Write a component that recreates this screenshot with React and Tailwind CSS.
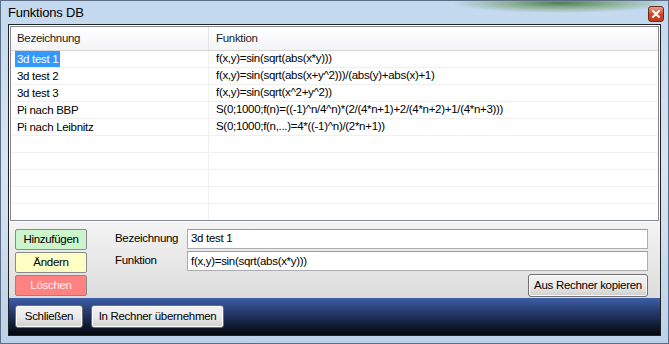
import { useState } from 'react';

const rows = [
  { name: '3d test 1', fn: 'f(x,y)=sin(sqrt(abs(x*y)))' },
  { name: '3d test 2', fn: 'f(x,y)=sin(sqrt(abs(x+y^2)))/(abs(y)+abs(x)+1)' },
  { name: '3d test 3', fn: 'f(x,y)=sin(sqrt(x^2+y^2))' },
  { name: 'Pi nach BBP', fn: 'S(0;1000;f(n)=((-1)^n/4^n)*(2/(4*n+1)+2/(4*n+2)+1/(4*n+3)))' },
  { name: 'Pi nach Leibnitz', fn: 'S(0;1000;f(n,...)=4*((-1)^n)/(2*n+1))' },
  { name: '', fn: '' },
  { name: '', fn: '' },
  { name: '', fn: '' },
  { name: '', fn: '' },
  { name: '', fn: '' },
];

function WinButton({ children, className = '' }) {
  return (
    <button
      className={`whitespace-nowrap rounded-[3px] border border-[#707070] bg-gradient-to-b from-[#f2f2f2] via-[#ebebeb] to-[#cfcfcf] text-[11.5px] tracking-[-0.3px] text-black leading-none shadow-[inset_0_0_0_1px_#fcfcfc] ${className}`}
    >
      {children}
    </button>
  );
}

export default function App() {
  const [selected] = useState(0);

  return (
    <div
      className="w-[669px] h-[344px] flex flex-col overflow-hidden bg-gradient-to-b from-[#c3d9ef] via-[#d6e5f3] to-[#bcd2e8] border border-[#5c6f86] text-[11.5px] tracking-[-0.3px]"
      style={{ fontFamily: '"Liberation Sans", Arial, sans-serif' }}
    >
      {/* Titelleiste */}
      <div className="h-[23px] shrink-0 flex items-center justify-between pl-[7px] pr-[4px] bg-[radial-gradient(ellipse_110px_10px_at_560px_2px,#4f7f55_0%,#8fb39a_50%,transparent_100%)]">
        <span className="text-[13px] tracking-[-0.2px] text-black">Funktions DB</span>
        <div className="w-[16px] h-[16px] mt-[2px] rounded-[3px] border border-[#6b2a1c] bg-gradient-to-b from-[#e8a08a] via-[#d2472a] to-[#c23a1c] flex items-center justify-center">
          <svg width="8" height="8" viewBox="0 0 8 8">
            <path d="M1 1 L7 7 M7 1 L1 7" stroke="#fff" strokeWidth="2" strokeLinecap="square" />
          </svg>
        </div>
      </div>

      {/* Client */}
      <div className="flex-1 flex flex-col mx-[7px] mb-[7px] border border-[#222] bg-white min-h-0">
        {/* ListView */}
        <div className="h-[195px] shrink-0 m-[1px] border border-[#828790] bg-white flex flex-col overflow-hidden">
          <div className="h-[24px] shrink-0 flex bg-gradient-to-b from-white to-[#f3f4f6] border-b border-[#d5d5d5] text-[#1e1e1e]">
            <div className="w-[198px] pl-[6px] flex items-center border-r border-[#e3e4e5]">Bezeichnung</div>
            <div className="flex-1 pl-[7px] flex items-center">Funktion</div>
          </div>
          {rows.map((r, i) => (
            <div key={i} className="h-[17px] shrink-0 flex border-b border-[#f0f0f0] text-black">
              <div className="w-[198px] pl-[4px] flex items-center border-r border-[#f0f0f0]">
                {r.name && (
                  <span className={`px-[2px] leading-[16px] ${i === selected ? 'bg-[#3399ff] text-white' : ''}`}>
                    {r.name}
                  </span>
                )}
              </div>
              <div className="flex-1 pl-[7px] flex items-center whitespace-nowrap">{r.fn}</div>
            </div>
          ))}
        </div>

        {/* Bearbeitungsbereich */}
        <div className="flex-1 flex bg-gradient-to-b from-[#f4f4f4] to-[#dcdcdc] pl-[6px] pr-[12px] pt-[7px]">
          <div className="flex flex-col gap-[2px] w-[72px]">
            <button className="h-[21px] rounded-[2px] border border-[#8a8a8a] bg-[#ccf5cc] text-black">Hinzufügen</button>
            <button className="h-[21px] rounded-[2px] border border-[#8a8a8a] bg-[#ffffc4] text-black">Ändern</button>
            <button className="h-[21px] rounded-[2px] border border-[#8a8a8a] bg-[#ff8282] text-[#fff0f0]">Löschen</button>
          </div>
          <div className="flex-1 flex flex-col ml-[28px]">
            <div className="flex items-center h-[20px]">
              <span className="w-[72px] text-black">Bezeichnung</span>
              <div className="flex-1 h-[20px] border border-[#abadb3] border-t-[#9a9a9a] bg-white text-black pl-[3px] flex items-center">3d test 1</div>
            </div>
            <div className="flex items-center h-[20px] mt-[2px]">
              <span className="w-[72px] text-black">Funktion</span>
              <div className="flex-1 h-[20px] border border-[#abadb3] border-t-[#9a9a9a] bg-white text-black pl-[3px] pt-[1px]">f(x,y)=sin(sqrt(abs(x*y)))</div>
            </div>
            <div className="flex justify-end mt-[3px]">
              <WinButton className="w-[120px] h-[23px]">Aus Rechner kopieren</WinButton>
            </div>
          </div>
        </div>

        {/* Fußleiste */}
        <div className="h-[37px] shrink-0 flex items-center gap-[8px] pl-[6px] bg-gradient-to-b from-[#3d5ea8] via-[#1c2c55] via-55% to-[#05070c]">
          <WinButton className="w-[68px] h-[23px]">Schließen</WinButton>
          <WinButton className="w-[133px] h-[23px]">In Rechner übernehmen</WinButton>
        </div>
      </div>
    </div>
  );
}
